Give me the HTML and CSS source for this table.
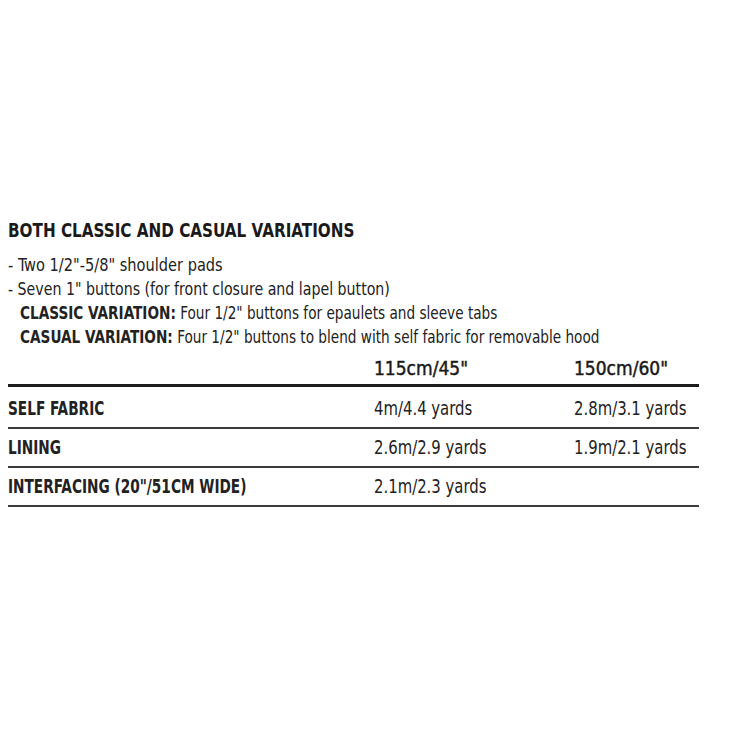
FILE: index.html
```html
<!DOCTYPE html>
<html>
<head>
<meta charset="utf-8">
<link rel="stylesheet" href="styles.css">
</head>
<body>
<div class="page">
  <h2 class="title">BOTH CLASSIC AND CASUAL VARIATIONS</h2>
  <ul class="notes">
    <li class="item short">- Two 1/2"-5/8" shoulder pads</li>
    <li class="item">- Seven 1" buttons (for front closure and lapel button)</li>
    <li class="sub"><b>CLASSIC VARIATION:</b> Four 1/2" buttons for epaulets and sleeve tabs</li>
    <li class="sub"><b>CASUAL VARIATION:</b> Four 1/2" buttons to blend with self fabric for removable hood</li>
  </ul>
  <div class="yardage">
    <div class="row head">
      <div class="cell label"></div>
      <div class="cell size">115cm/45"</div>
      <div class="cell size">150cm/60"</div>
    </div>
    <div class="row first">
      <div class="cell label">SELF FABRIC</div>
      <div class="cell value">4m/4.4 yards</div>
      <div class="cell value">2.8m/3.1 yards</div>
    </div>
    <div class="row">
      <div class="cell label">LINING</div>
      <div class="cell value">2.6m/2.9 yards</div>
      <div class="cell value">1.9m/2.1 yards</div>
    </div>
    <div class="row">
      <div class="cell label">INTERFACING (20"/51CM WIDE)</div>
      <div class="cell value">2.1m/2.3 yards</div>
      <div class="cell value"></div>
    </div>
  </div>
</div>
</body>
</html>
```

FILE: styles.css
```css
html, body {
  margin: 0;
  padding: 0;
  background: #ffffff;
}
body {
  font-family: "DejaVu Sans Condensed", "DejaVu Sans", sans-serif;
  color: #1f1f1f;
}
.page {
  padding: 217px 0 0 8px;
  width: 691px;
}
.title {
  margin: 0;
  font-size: 20px;
  line-height: 26px;
  font-weight: 700;
  color: #1a1a1a;
  white-space: nowrap;
  transform: scaleX(0.845);
  transform-origin: 0 50%;
}
.notes {
  list-style: none;
  margin: 10px 0 0 0;
  padding: 0;
  font-size: 18px;
  line-height: 24px;
  color: #222;
}
.notes li {
  white-space: nowrap;
  transform-origin: 0 50%;
}
.notes .item {
  transform: scaleX(0.875);
}
.notes .item.short {
  transform: scaleX(0.9);
}
.notes .sub {
  margin-left: 12px;
  transform: scaleX(0.842);
}
.notes b {
  font-weight: 700;
}
.yardage {
  margin-top: 8px;
}
.row {
  display: grid;
  grid-template-columns: 366px 200px 1fr;
  border-bottom: 2px solid #3c3c3c;
  height: 37px;
  line-height: 36px;
  font-size: 19px;
  color: #222;
}
.row.first {
  padding-top: 3px;
}
.row.head {
  height: 27px;
  line-height: 23px;
  border-bottom: 3px solid #1c1c1c;
}
.cell {
  white-space: nowrap;
  transform-origin: 0 50%;
}
.label {
  font-weight: 700;
  transform: scaleX(0.8);
}
.size {
  color: #1a1a1a;
  -webkit-text-stroke: 0.45px #1a1a1a;
}
.value {
  transform: scaleX(0.87);
}
```
